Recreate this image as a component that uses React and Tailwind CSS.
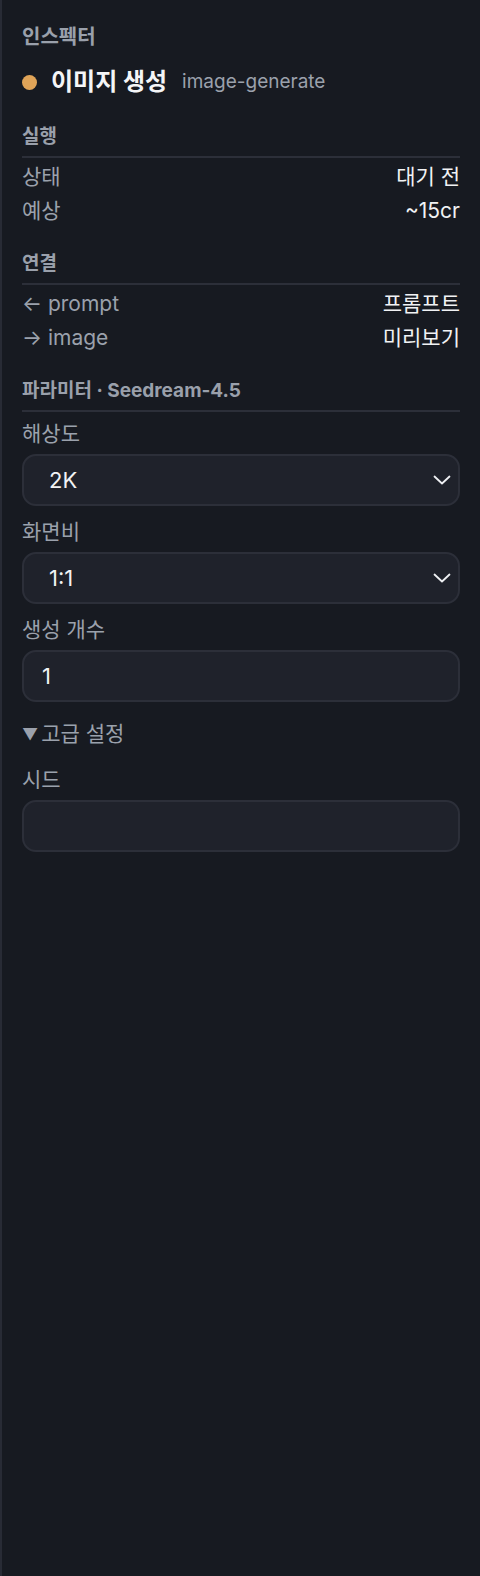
import React from "react";

const FONT = { fontFamily: '"Inter", "Noto Sans CJK KR", sans-serif' };

function Section({ title, className = "mt-6", children }) {
  return (
    <div className={className}>
      <div className="text-[19px] font-bold text-[#9aa0ab] leading-[24px] pb-[7px] border-b-2 border-[#2c2f39]">{title}</div>
      <div className="mt-[2px]">{children}</div>
    </div>
  );
}

function Row({ label, value }) {
  return (
    <div className="flex justify-between items-center h-[34px] text-[21px]">
      <span className="text-[#9ba1ac]">{label}</span>
      <span className="text-[#f1f2f4]">{value}</span>
    </div>
  );
}

function Field({ label, className = "mt-[13px]", children }) {
  return (
    <div className={className}>
      <div className="text-[21px] text-[#9ba1ac] leading-[26px] mb-[7px]">{label}</div>
      {children}
    </div>
  );
}

function Chevron() {
  return (
    <svg width="20" height="12" viewBox="0 0 20 12" fill="none" className="text-[#eef0f3]">
      <polyline points="2.5,2.5 10,9.5 17.5,2.5" stroke="currentColor" strokeWidth="1.8" strokeLinecap="round" strokeLinejoin="round" />
    </svg>
  );
}

function SelectBox({ value }) {
  return (
    <div className="h-[52px] rounded-[14px] border-2 border-[#2c2f39] bg-[#1f222b] flex items-center justify-between pl-[25px] pr-[6px]">
      <span className="text-[22px] text-[#f1f2f4]">{value}</span>
      <Chevron />
    </div>
  );
}

function InputBox({ value }) {
  return (
    <div className="h-[52px] rounded-[14px] border-2 border-[#2c2f39] bg-[#1f222b] flex items-center pl-[18px]">
      <span className="text-[22px] text-[#f1f2f4]">{value}</span>
    </div>
  );
}

export default function App() {
  return (
    <div style={FONT} className="min-h-[1576px] w-[480px] bg-[#171a21] border-l-2 border-[#282b35] pl-5 pr-5 pt-[22px]">
      <div className="text-[20px] font-bold text-[#9aa0ab] leading-[30px]">인스펙터</div>

      <div className="flex items-center mt-[14px] h-[32px]">
        <span className="w-[15px] h-[15px] rounded-full bg-[#e0a458]" />
        <span className="ml-[14px] text-[24px] font-bold text-[#f4f5f7]">이미지 생성</span>
        <span className="ml-[15px] text-[19px] text-[#9ba1ac]">image-generate</span>
      </div>

      <Section title="실행" className="mt-[27px]">
        <Row label="상태" value="대기 전" />
        <Row label="예상" value="~15cr" />
      </Section>

      <Section title="연결">
        <Row label="← prompt" value="프롬프트" />
        <Row label="→ image" value="미리보기" />
      </Section>

      <Section title="파라미터 · Seedream-4.5">
        <Field label="해상도" className="mt-[9px]"><SelectBox value="2K" /></Field>
        <Field label="화면비"><SelectBox value="1:1" /></Field>
        <Field label="생성 개수"><InputBox value="1" /></Field>
        <div className="mt-[19px] text-[21px] text-[#9ba1ac] leading-[26px] flex items-center">
          <span className="text-[16px] mr-[3px]">▼</span>고급 설정
        </div>
        <Field label="시드" className="mt-[20px]"><InputBox value="" /></Field>
      </Section>
    </div>
  );
}
